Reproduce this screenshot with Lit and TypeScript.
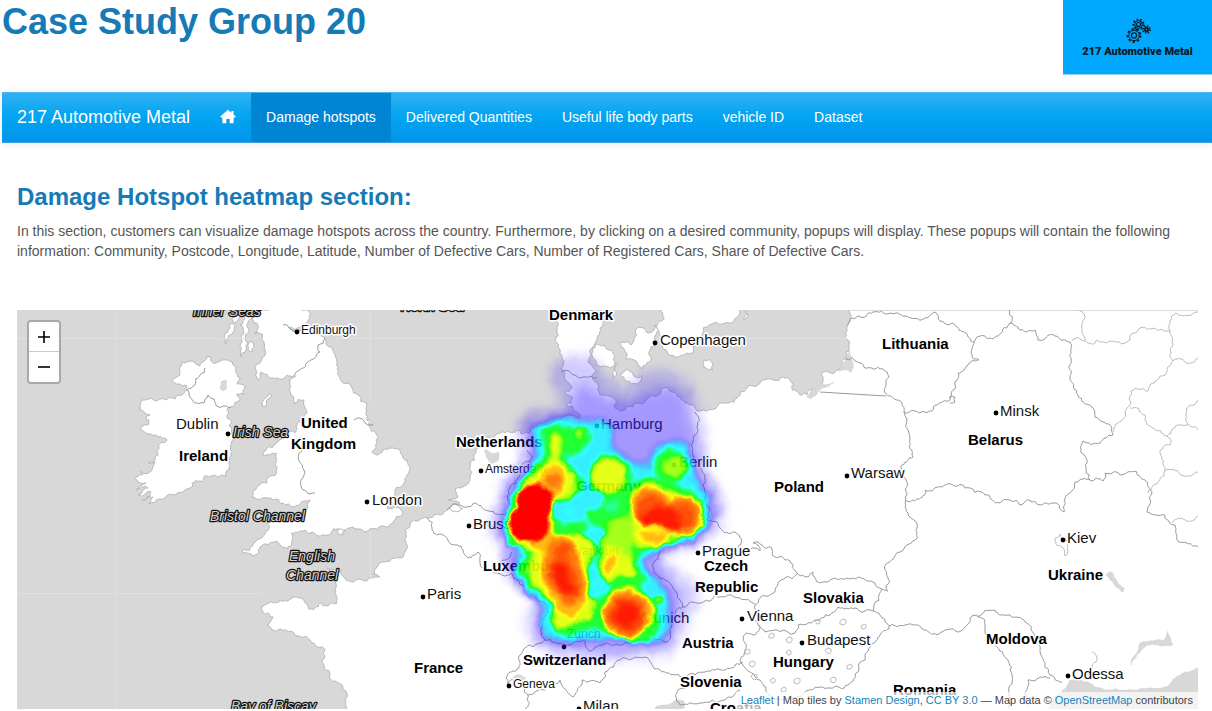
import { LitElement, html, svg, css } from "lit";
import { customElement, state } from "lit/decorators.js";

type Pt = [number, number];

/** Parses "x,y x,y ..." into points. */
const pts = (s: string): Pt[] => s.trim().split(/\s+/).map((p) => p.split(",").map(Number) as Pt);

/** Roughens a polyline by displacing midpoints, so coasts and borders look natural. */
function rough(s: string, amount: number, close = false): string {
  let seed = 7;
  const rnd = () => ((seed = (seed * 16807) % 2147483647) / 2147483647) - 0.5;
  let line = pts(s);
  if (close) line.push(line[0]);
  for (let pass = 0; pass < 3; pass++) {
    const next: Pt[] = [line[0]];
    for (let i = 1; i < line.length; i++) {
      const [ax, ay] = line[i - 1];
      const [bx, by] = line[i];
      const len = Math.hypot(bx - ax, by - ay);
      if (len > 3 && len < 60) {
        const d = rnd() * amount * Math.min(len, 12);
        next.push([(ax + bx) / 2 - ((by - ay) / len) * d, (ay + by) / 2 + ((bx - ax) / len) * d]);
      }
      next.push([bx, by]);
    }
    line = next;
  }
  return "M" + line.map((p) => p.map((n) => n.toFixed(1)).join(",")).join("L") + (close ? "Z" : "");
}

/** Closed smooth curve through the points; "o x y r" gives a circle. */
function smooth(s: string): string {
  if (s[0] === "o") {
    const [x, y, r] = s.slice(2).split(" ").map(Number);
    return `M${x - r},${y}a${r},${r} 0 1 0 ${2 * r},0a${r},${r} 0 1 0 ${-2 * r},0Z`;
  }
  const p = pts(s);
  const n = p.length;
  let d = `M${p[0]}`;
  for (let i = 0; i < n; i++) {
    const [a, b, c, e] = [p[(i + n - 1) % n], p[i], p[(i + 1) % n], p[(i + 2) % n]];
    d += `C${b[0] + (c[0] - a[0]) / 6},${b[1] + (c[1] - a[1]) / 6} ${c[0] - (e[0] - b[0]) / 6},${c[1] - (e[1] - b[1]) / 6} ${c}`;
  }
  return d + "Z";
}

const LAND = [
  // Ireland
  "207,356 212,362 218,362 228,360 235,366 240,378 237,384 245,386 244,395 237,394 240,400 231,407 227,409 231,420 229,426 233,440 231,456 230,465 226,472 226,477 212,476 200,481 192,483 185,490 175,495 165,498 155,502 148,504 153,497 142,500 151,492 138,495 148,488 136,490 146,483 137,480 134,478 143,475 141,471 150,472 155,462 148,463 158,455 159,447 167,440 158,437 148,434 140,428 149,424 146,418 150,415 140,410 142,400 150,398 160,399 175,399 183,394 187,386 178,384 172,381 180,375 182,362 192,361 200,366 204,361",
  // Great Britain
  "262,310 252,318 258,325 254,334 262,334 264,342 265,350 256,370 258,380 261,372 268,376 278,378 290,376 298,371 290,380 289,390 294,398 294,404 304,400 306,410 301,422 296,432 282,435 278,442 273,447 263,455 277,453 277,467 276,474 267,483 258,486 253,492 252,497 263,498 273,500 283,503 293,507 300,504 310,500 308,508 302,513 288,520 267,523 265,534 257,540 250,550 242,550 243,554 253,556 260,547 268,545 276,541 280,545 287,549 291,533 300,531 310,533 320,536 327,535 337,529 344,532 350,528 360,529 377,530 383,526 393,523 396,517 403,513 400,509 387,508 398,500 392,497 397,487 405,481 409,473 408,460 400,450 390,448 383,450 377,455 372,452 377,443 375,432 369,422 373,425 366,413 367,405 358,395 352,388 343,383 338,367 333,350 325,338 316,333 300,330 289,328 302,324 310,318 308,310",
  // Hebrides and the Kintyre peninsula
  "246,312 252,318 249,330 245,335 246,350 241,357 240,346 244,333 240,325",
  "228,330 236,322 239,310 232,320 233,333 226,344 224,338",
  "250,341 254,346 253,352 248,350",
  // Isle of Man
  "269,393 271,397 266,406 262,406 264,399",
  // Continent
  "353,712 345,700 342,685 330,675 322,660 325,650 315,645 310,640 298,636 285,630 272,630 267,625 273,617 263,613 262,607 268,603 280,600 290,599 297,597 302,598 308,608 320,603 328,606 337,603 335,590 333,580 327,568 333,570 342,570 345,578 356,580 367,581 380,577 373,575 377,567 390,561 403,557 407,548 405,530 410,523 427,518 437,514 447,510 455,508 460,503 448,500 458,497 455,491 463,487 470,477 475,460 478,447 482,442 487,437 500,433 510,432 523,434 530,432 533,428 545,425 560,420 570,415 580,418 573,407 566,405 573,398 565,392 572,388 565,380 562,370 564,362 560,350 555,340 557,330 555,310 602,310 603,325 597,340 590,350 588,362 597,372 592,376 597,382 598,390 613,397 615,408 620,411 633,407 639,403 647,398 658,395 663,388 672,392 680,397 686,403 697,411 720,403 737,398 740,392 747,388 763,380 783,377 790,380 792,390 800,395 807,395 818,390 823,380 823,372 837,370 847,357 848,340 847,327 848,310 1203,310 1203,712",
  // Sweden
  "657,309 663,320 657,330 660,336 663,343 668,355 680,356 693,353 692,346 702,338 703,328 712,324 733,322 739,309",
  "743,309 744,320 747,309",
  // Danish islands
  "636,329 648,333 655,325 655,340 650,350 651,360 642,369 636,361 626,360 620,343 628,341 631,345 634,340",
  "592,349 604,345 612,350 615,362 610,368 600,367 593,358",
  "620,375 632,372 642,377 638,384 626,381",
  "615,368 618,362 617,374 613,378",
  "704,360 713,364 713,370 704,367",
  "449,508 458,505 463,508 456,512",
  "337,532 345,530 343,535",
];

const LAKES = [
  "838,371 851,372 852,360 849,348 847,358",
  "807,397 820,384 834,382 820,390 811,399",
  "1106,575 1112,572 1124,588 1123,592 1110,580",
  "1131,665 1134,656 1140,643 1150,641 1163,641 1168,631 1173,644 1160,646 1148,645 1140,652",
  "1045,712 1060,693 1070,680 1082,681 1093,685 1110,690 1133,690 1150,688 1166,687 1173,679 1185,672 1203,666 1203,712",
  "652,712 662,705 676,700 684,701 683,712",
  "484,450 491,453 499,452 498,461 490,463 487,458",
  "221,382 227,381 227,388 223,391 220,388",
  "513,677 521,675 526,678 517,680",
];

const BORDERS = [
  "205,368 200,375 195,385 186,390 190,397 197,403 204,403 208,395 214,399 219,407 225,406 231,407",
  "325,338 318,345 320,352 308,362 298,371",
  "283,325 289,328 302,330",
  "300,437 303,450 299,461 304,470 301,480 303,490 310,494 315,493",
  "354,420 364,421 373,425",
  "848,325 858,316 873,312 890,313 905,316 925,318 935,312 940,321 955,325 965,333 974,342 972,357 979,360 968,365 958,373 955,385 950,400 937,405 925,412 904,412",
  "845,359 858,362 872,368 883,369 889,377 886,394 902,403 904,412 910,440 913,457 902,465 906,480 906,500 910,517 917,527 915,540 900,552 885,570 886,588 888,591 882,589",
  "949,398 955,397 955,402 950,403",
  "974,342 985,336 998,336 1009,324 1020,330 1035,330 1038,340 1055,336 1070,342 1072,345 1071,360 1070,378 1078,395 1092,407 1095,417 1112,428 1113,435 1100,443 1083,441 1081,450 1087,460 1090,480 1075,482 1067,495 1064,512 1052,503 1040,505 1030,500 1020,505 1010,500 1000,503 985,495 965,488 942,487 925,490 917,499 906,500",
  "1009,310 1010,324",
  "1090,481 1103,481 1105,473 1120,475 1137,472 1145,480 1152,493 1147,512 1165,515 1175,525 1177,540 1187,543 1198,547",
  "753,543 762,545 772,548 772,555 790,561 797,573 808,577 813,572 820,583 835,578 850,579 860,577 875,583 882,589 873,611",
  "797,574 785,578 775,592 760,598 755,605 758,625 765,632 795,633 798,625 815,620 830,615 838,607 855,608 865,611 873,611 885,620 890,626 905,625 925,630 937,635 945,630 965,627 970,618 977,615",
  "683,607 700,603 715,595 740,598 755,604",
  "707,520 720,528 735,532 742,540 738,547 748,552",
  "753,543 760,551 748,550",
  "660,550 652,565 665,580 680,600 683,607 676,610 672,625 667,642 650,640 640,640",
  "758,625 755,635 743,637 745,650 740,660 743,665 760,680 770,695 785,700 805,692 820,687 830,688 848,685 855,675 865,660 870,645 880,635 890,625",
  "977,616 985,625 995,645 1008,660 1012,675 1008,709",
  "977,616 995,610 1010,615 1025,622 1035,635 1040,650 1045,665 1050,675 1062,682",
  "1028,705 1028,680 1040,677 1050,678",
  "427,518 432,530 443,535 450,543 463,550 468,558 478,552 480,563 500,574 512,574 524,586",
  "447,510 460,505 475,503 485,510 500,515 508,512",
  "527,450 530,462 522,465 520,475 508,490 510,505",
  "500,574 503,560 512,552",
  "508,684 510,672 520,665 520,655 530,645 545,640 565,645 585,640 589,651 595,647 608,643 620,645 640,640",
  "508,684 525,680 528,695 545,690 560,680 573,697 582,680 600,683 605,672 620,660 645,657 660,670 678,674 695,675 705,672 725,670 735,665 743,662",
  "695,675 678,690 680,705 700,703 725,700 740,690",
  "528,695 525,709",
  "695,412 698,430 693,455 705,475 703,485 710,510 707,520",
  "561,372 575,375 585,377 597,378",
  "545,640 542,620 548,605 530,595",
];

const OBLASTS = [
  "1072,341 1085,341 1100,342 1125,343 1140,328 1155,328 1170,331 1173,345 1173,361 1165,375 1150,385 1148,391 1135,388 1130,405 1113,432",
  "1075,310 1085,318 1085,341",
  "1170,331 1176,313 1198,312",
  "1173,361 1185,362 1198,358",
  "1130,408 1145,415 1153,428 1167,436 1180,425 1188,424 1198,430",
  "1167,436 1170,445 1160,453 1165,470 1160,480 1148,493",
  "1165,471 1180,474 1198,472",
  "1188,424 1190,405 1198,400",
  "1172,523 1185,520 1198,516",
  "1056,544 1060,534 1066,540 1068,546 1065,556 1062,547 1056,544",
  "1092,652 1096,662 1092,668",
];

const PONDS: Pt[] = [[771, 636], [789, 640], [790, 653], [842, 622], [864, 627], [829, 651], [849, 667], [833, 680], [774, 681], [796, 681], [784, 690], [755, 677], [747, 652], [752, 664], [819, 622]];

/** Heat contours: [level, blur, outlines]. Painted in order, one over the other. */
const HEAT: [number, number, string[]][] = [
  [0.18, 6, ["566,356 590,356 606,374 625,388 640,374 655,370 674,372 692,386 699,410 704,430 706,450 706,465 716,485 724,500 725,518 716,533 690,548 666,556 664,562 684,574 698,590 694,612 684,630 676,650 655,658 600,660 560,656 538,648 527,630 528,612 537,600 512,583 502,565 502,550 492,540 491,525 498,500 504,478 520,462 520,440 516,424 532,409 558,406 558,395 550,378 554,364"]],
  [0.34, 6, ["575,388 588,386 602,396 625,402 650,392 670,388 685,400 691,425 698,450 700,470 713,490 716,515 698,538 665,551 658,562 674,585 678,605 672,632 655,648 600,650 555,645 535,632 538,605 515,580 507,560 508,547 498,530 502,505 512,480 528,462 528,440 523,425 540,417 562,414 574,402"]],
  [0.58, 3, [
    "535,426 548,421 570,418 585,420 600,419 614,430 613,447 630,459 647,465 653,450 668,441 686,444 694,460 697,480 708,494 711,510 709,524 687,543 660,549 642,563 654,577 670,597 670,620 665,637 640,643 613,640 580,642 547,638 540,623 542,607 523,587 513,570 517,552 503,533 505,513 513,490 530,467 534,447 531,433",
  ]],
  [0.69, 2, [
    "541,430 558,425 574,428 588,430 590,440 584,450 571,457 562,457 572,466 583,480 578,494 562,500 553,508 552,518 564,524 576,520 590,526 584,536 598,545 592,560 588,580 594,600 610,588 628,582 640,590 652,602 661,622 655,636 640,642 610,634 590,628 575,636 553,632 552,612 548,600 527,585 518,568 527,550 508,540 508,505 520,485 532,468 544,452",
    "595,458 620,457 632,472 632,486 640,477 662,480 690,490 704,508 700,528 680,540 655,546 640,556 638,566 646,578 640,586 620,588 602,580 596,560 602,540 604,532 592,524 584,512 598,508 606,496 592,490",
    "o 671 466 17",
    "o 659 600 6",
  ]],
  [0.6, 3, ["o 593 531 5", "o 626 474 3", "o 598 585 6", "o 612 506 4", "o 568 510 7"]],
  [0.76, 2, ["o 673 467 11", "o 562 488 13", "o 580 432 5", "606,528 622,517 634,520 634,548 630,572 606,580 602,560"]],
  [0.79, 2, [
    "553,434 561,436 562,446 560,455 564,464 576,476 572,490 556,498 540,490 532,478 542,465 551,458 550,445",
    "o 608 476 18",
    "632,498 640,486 654,484 672,492 690,496 703,506 702,526 688,536 674,537 666,545 650,548 634,542",
    "515,540 526,480 548,490 552,534 576,534 594,544 592,556 587,568 590,590 594,606 588,620 574,624 562,630 554,626 552,604 540,592 528,574 530,552",
    "602,552 612,544 622,550 632,564 636,576 620,576 608,579 601,568",
    "o 628 612 26",
    "o 659 600 3",
  ]],
  [0.86, 2, [
    "545,468 556,465 566,474 562,488 552,500 540,490",
    "541,540 562,534 576,546 582,562 586,588 582,608 570,618 558,610 550,594 543,580 542,560",
    "530,540 540,480 552,500 552,535 545,548",
    "612,554 617,560 612,570 605,572 606,562",
    "640,532 668,534 660,542 644,541",
  ]],
  [0.91, 2, ["o 651 506 18", "o 682 516 19", "o 627 614 23", "549,544 566,540 578,558 584,590 573,604 560,600 547,580", "o 554 482 8"]],
  [0.94, 2, ["o 650 510 14", "o 681 517 13", "o 562 551 7", "o 627 615 17", "554,560 568,560 579,580 579,596 563,596 550,578"]],
  [0.98, 3, ["641,516 654,508 668,506 678,514 682,528 674,533 662,527 646,524", "554,566 564,566 570,580 576,592 564,594 552,578", "614,610 626,602 640,610 636,624 622,627 615,620"]],
];

/** Saturated plateaus keep a crisp rim. */
const HOT = ["o 535 502 18", "o 529 523 20"];

type Label = [x: number, y: number, text: string];
const COUNTRIES: Label[] = [
  [549, 320, "Denmark"], [882, 349, "Lithuania"], [968, 445, "Belarus"], [774, 492, "Poland"],
  [301, 428, "United"], [291, 449, "Kingdom"], [179, 461, "Ireland"], [456, 447, "Netherlands"],
  [576, 491, "Germany"], [483, 571, "Luxemburg"], [704, 571, "Czech"], [695, 592, "Republic"],
  [803, 603, "Slovakia"], [1048, 580, "Ukraine"], [682, 648, "Austria"], [773, 667, "Hungary"],
  [986, 644, "Moldova"], [523, 665, "Switzerland"], [414, 673, "France"], [680, 687, "Slovenia"],
  [893, 695, "Romania"], [710, 713, "Croatia"],
];
const CITIES: Label[] = [
  [176, 429, "Dublin"], [660, 345, "Copenhagen"], [601, 429, "Hamburg"], [679, 467, "Berlin"],
  [1000, 416, "Minsk"], [851, 478, "Warsaw"], [372, 505, "London"], [473, 529, "Brussels"],
  [427, 599, "Paris"], [702, 556, "Prague"], [747, 621, "Vienna"], [807, 645, "Budapest"],
  [1067, 543, "Kiev"], [1072, 679, "Odessa"], [641, 623, "Munich"], [583, 711, "Milan"],
];
const TOWNS: Label[] = [
  [301, 334, "Edinburgh"], [485, 473, "Amsterdam"], [571, 555, "Frankfurt"], [567, 638, "Zurich"], [513, 688, "Geneva"],
];
const SEAS: Label[] = [
  [193, 316, "Inner Seas"], [401, 311, "North Sea"], [233, 437, "Irish Sea"], [210, 521, "Bristol Channel"],
  [289, 561, "English"], [286, 580, "Channel"], [231, 711, "Bay of Biscay"],
];
const DOTS: Pt[] = [
  [297, 332], [228, 434], [655, 343], [996, 413], [847, 476], [367, 502], [481, 471], [469, 526], [423, 597],
  [698, 553], [742, 619], [802, 643], [1063, 540], [1068, 676], [564, 647], [509, 686], [579, 709], [597, 426], [674, 465],
];

@customElement("heat-map")
export class HeatMap extends LitElement {
  @state() private zoom = 0;

  static styles = css`
    :host { display: block; position: relative; height: 399px; overflow: hidden; background: #d8d8d8; }
    .map { display: block; width: 100%; height: 100%; }
    .land { fill: #fff; stroke: #b8b8b8; stroke-width: 1; stroke-linejoin: round; }
    .lake { fill: #d8d8d8; stroke: #cccccc; stroke-width: 0.5; }
    .border { fill: none; stroke: #999; stroke-width: 1; stroke-linejoin: round; }
    .oblast { fill: none; stroke: #bbb; stroke-width: 1; }
    .seam { stroke: #e0e0e0; stroke-width: 1; }
    text { font-family: "Liberation Sans", Arial, sans-serif; fill: #111; stroke: #fff; stroke-width: 3; stroke-linejoin: round; paint-order: stroke; }
    .country { font-size: 15px; font-weight: bold; fill: #000; }
    .city { font-size: 15px; }
    .town { font-size: 12px; }
    .sea { font-size: 14px; font-style: italic; fill: #d0d0d0; stroke: #111; stroke-width: 2.4; }
    .controls { position: absolute; left: 10px; top: 10px; display: flex; flex-direction: column; border: 2px solid rgba(0, 0, 0, 0.22); border-radius: 4px; background-clip: padding-box; }
    .controls button { width: 30px; height: 30px; padding: 0; border: 0; background: #fff; display: grid; place-items: center; cursor: pointer; }
    .controls button:first-child { border-bottom: 1px solid #ccc; border-radius: 2px 2px 0 0; }
    .controls button:last-child { border-radius: 0 0 2px 2px; }
    .controls svg { display: block; width: 14px; height: 14px; stroke: #000; stroke-width: 1.6; }
    .credit { position: absolute; right: 0; bottom: 0; padding: 0 5px; background: rgba(255, 255, 255, 0.7); color: #444; font: 11px/17px "Liberation Sans", Arial, sans-serif; white-space: nowrap; }
    .credit a { color: #1583b8; text-decoration: none; }
  `;

  private labels(list: Label[], kind: string) {
    return list.map(([x, y, t]) => svg`<text class=${kind} x=${x} y=${y}>${t}</text>`);
  }

  render() {
    const scale = 1.2 ** this.zoom;
    return html`
      <svg class="map" viewBox="17 310 1181 399" preserveAspectRatio="xMidYMid slice" role="img" aria-label="Damage hotspots in Germany">
        <defs>
          ${HEAT.map(([, blur], i) => svg`<filter id=${"blur" + i} filterUnits="userSpaceOnUse" x="460" y="330" width="300" height="360" color-interpolation-filters="sRGB"><feGaussianBlur stdDeviation=${blur}/></filter>`)}
          <filter id="rim" filterUnits="userSpaceOnUse" x="460" y="330" width="300" height="360" color-interpolation-filters="sRGB"><feGaussianBlur stdDeviation="1.5"/></filter>
          <filter id="ramp" filterUnits="userSpaceOnUse" x="460" y="330" width="300" height="360" color-interpolation-filters="sRGB">
            <feTurbulence type="fractalNoise" baseFrequency="0.08" numOctaves="2" seed="4" result="noise"/>
            <feDisplacementMap in="SourceGraphic" in2="noise" scale="8" xChannelSelector="R" yChannelSelector="G"/>
            <feColorMatrix values="1 0 0 0 0  1 0 0 0 0  1 0 0 0 0  1 0 0 0 0"/>
            <feComponentTransfer>
              <feFuncR type="table" tableValues="0.2 0.2 0.2 0.2 0.2 0 0 0 1 1 1"/>
              <feFuncG type="table" tableValues="0.1 0.1 0.1 0.1 0.1 0.6 1 1 1 0.5 0"/>
              <feFuncB type="table" tableValues="1 1 1 1 1 1 1 0 0 0 0"/>
              <feFuncA type="table" tableValues="0 0.12 0.25 0.4 0.52 0.68 0.82 0.88 0.92 0.95 1"/>
            </feComponentTransfer>
          </filter>
        </defs>
        <g transform="translate(608 510) scale(${scale}) translate(-608 -510)">
          ${LAND.map((s) => svg`<path class="land" d=${rough(s, 0.55, true)}/>`)}
          ${LAKES.map((s) => svg`<path class="lake" d=${rough(s, 0.3, true)}/>`)}
          ${OBLASTS.map((s) => svg`<path class="oblast" d=${rough(s, 0.55)}/>`)}
          ${BORDERS.map((s) => svg`<path class="border" d=${rough(s, 0.5)}/>`)}
          <path class="border" d="M820,392L886,396"/>
          ${PONDS.map(([x, y], i) => svg`<path class="oblast" d="M${x - 2},${y + 2}l${-(i % 3)},-3l3,-2l${2 + (i % 2)},1l0,3l-2,${1 + (i % 2)}Z"/>`)}
          <path class="seam" d="M17,338.5H258M335,338.5H555M700,338.5H847M17,593.5H262M115.5,310V709M370.5,310V405M370.5,531V580"/>
          ${this.labels(SEAS, "sea")} ${this.labels(TOWNS, "town")}
          ${this.labels(CITIES, "city")} ${this.labels(COUNTRIES, "country")}
          ${DOTS.map(([x, y]) => svg`<circle cx=${x} cy=${y} r="2.4"/>`)}
          <g filter="url(#ramp)">
            <rect x="460" y="330" width="300" height="360" fill="#000"/>
            ${HEAT.map(([level, , shapes], i) => {
              const v = Math.round(level * 255);
              return svg`<g filter="url(#blur${i})" fill="rgb(${v},${v},${v})">${shapes.map((s) => svg`<path d=${smooth(s)}/>`)}</g>`;
            })}
            <g filter="url(#rim)" fill="#fff">${HOT.map((s) => svg`<path d=${smooth(s)}/>`)}</g>
          </g>
        </g>
      </svg>
      <div class="controls">
        <button type="button" aria-label="Zoom in" @click=${() => this.zoom++}><svg viewBox="0 0 14 14"><path d="M7 1V13M1 7H13"/></svg></button>
        <button type="button" aria-label="Zoom out" @click=${() => (this.zoom = Math.max(0, this.zoom - 1))}><svg viewBox="0 0 14 14"><path d="M1 7H13"/></svg></button>
      </div>
      <div class="credit"><a href="#leaflet">Leaflet</a> | Map tiles by <a href="#stamen">Stamen Design</a>, <a href="#license">CC BY 3.0</a> — Map data © <a href="#osm">OpenStreetMap</a> contributors</div>
    `;
  }
}

@customElement("app-root")
export class AppRoot extends LitElement {
  @state() private page = "Damage hotspots";

  static styles = css`
    :host { display: block; background: #fff; color: #555; font: 14px/20px "Liberation Sans", Arial, sans-serif; }
    h1, h2, p { margin: 0; }
    h1, h2 { color: #157ab5; font-weight: bold; }
    .top { display: flex; justify-content: space-between; align-items: flex-start; height: 92px; padding-left: 2px; }
    h1 { font-size: 36px; line-height: 44px; }
    .logo { box-sizing: border-box; width: 149px; height: 75px; padding-top: 18px; display: flex; flex-direction: column; align-items: center; background: #00a8ff; border-bottom: 1px solid #8fd4f8; color: #0a1a26; font: 900 11px/18px Roboto, sans-serif; }
    .logo svg { display: block; width: 26px; height: 25px; }
    nav { display: flex; align-items: stretch; height: 49px; margin-left: 2px; border-top: 1px solid #4bb6ee; border-bottom: 1px solid #3c9fdd; background: linear-gradient(#31b1f1, #04a5f1 45%, #0095eb); box-shadow: 0 1px 8px rgba(0, 0, 0, 0.1); }
    nav a { display: flex; align-items: center; padding: 0 15px 2px; color: #fff; text-decoration: none; }
    nav a.brand { font-size: 18px; }
    nav a.active { background: #0085d5; }
    nav svg { display: block; width: 16px; height: 15px; fill: #fff; }
    main { padding: 42px 14px 0 17px; }
    h2 { font-size: 24px; line-height: 24px; padding-bottom: 12px; }
    p { padding-bottom: 49px; }
  `;

  private gear(cx: number, cy: number, r: number, teeth: number) {
    const step = (2 * Math.PI * r) / teeth;
    return svg`
      <circle cx=${cx} cy=${cy} r=${r} stroke-width="2" stroke-dasharray="${step * 0.5} ${step * 0.5}"/>
      <circle cx=${cx} cy=${cy} r=${r - 1.2} stroke-width="1"/>
      <circle cx=${cx} cy=${cy} r=${r * 0.4} stroke-width="1.2"/>`;
  }

  render() {
    const pages = ["Damage hotspots", "Delivered Quantities", "Useful life body parts", "vehicle ID", "Dataset"];
    return html`
      <header class="top">
        <h1>Case Study Group 20</h1>
        <div class="logo">
          <svg viewBox="0 0 26 25" fill="none" stroke="#0a1a26" aria-hidden="true">${this.gear(9, 17.5, 6.4, 9)}${this.gear(13.5, 6.5, 5, 9)}${this.gear(21.5, 11.5, 3.4, 8)}</svg>
          <span>217 Automotive Metal</span>
        </div>
      </header>
      <nav>
        <a class="brand" href="#top">217 Automotive Metal</a>
        <a href="#home" aria-label="Home"><svg viewBox="0 0 17 15"><path d="M8.5 0.3L0.3 7.4Q0.2 8.6 1.2 8.6H2.5V14Q2.5 14.8 3.3 14.8H6.7V10.2H10.3V14.8H13.7Q14.5 14.8 14.5 14V8.6H15.8Q16.8 8.6 16.7 7.4L14.3 5.3V1.6H12.2V3.5Z"/></svg></a>
        ${pages.map((p) => html`<a href="#${p.replace(/ /g, "-").toLowerCase()}" class=${p === this.page ? "active" : ""} @click=${() => (this.page = p)}>${p}</a>`)}
      </nav>
      <main>
        <h2>Damage Hotspot heatmap section:</h2>
        <p>In this section, customers can visualize damage hotspots across the country. Furthermore, by clicking on a desired community, popups will display. These popups will contain the following information: Community, Postcode, Longitude, Latitude, Number of Defective Cars, Number of Registered Cars, Share of Defective Cars.</p>
        <heat-map></heat-map>
      </main>
    `;
  }
}
